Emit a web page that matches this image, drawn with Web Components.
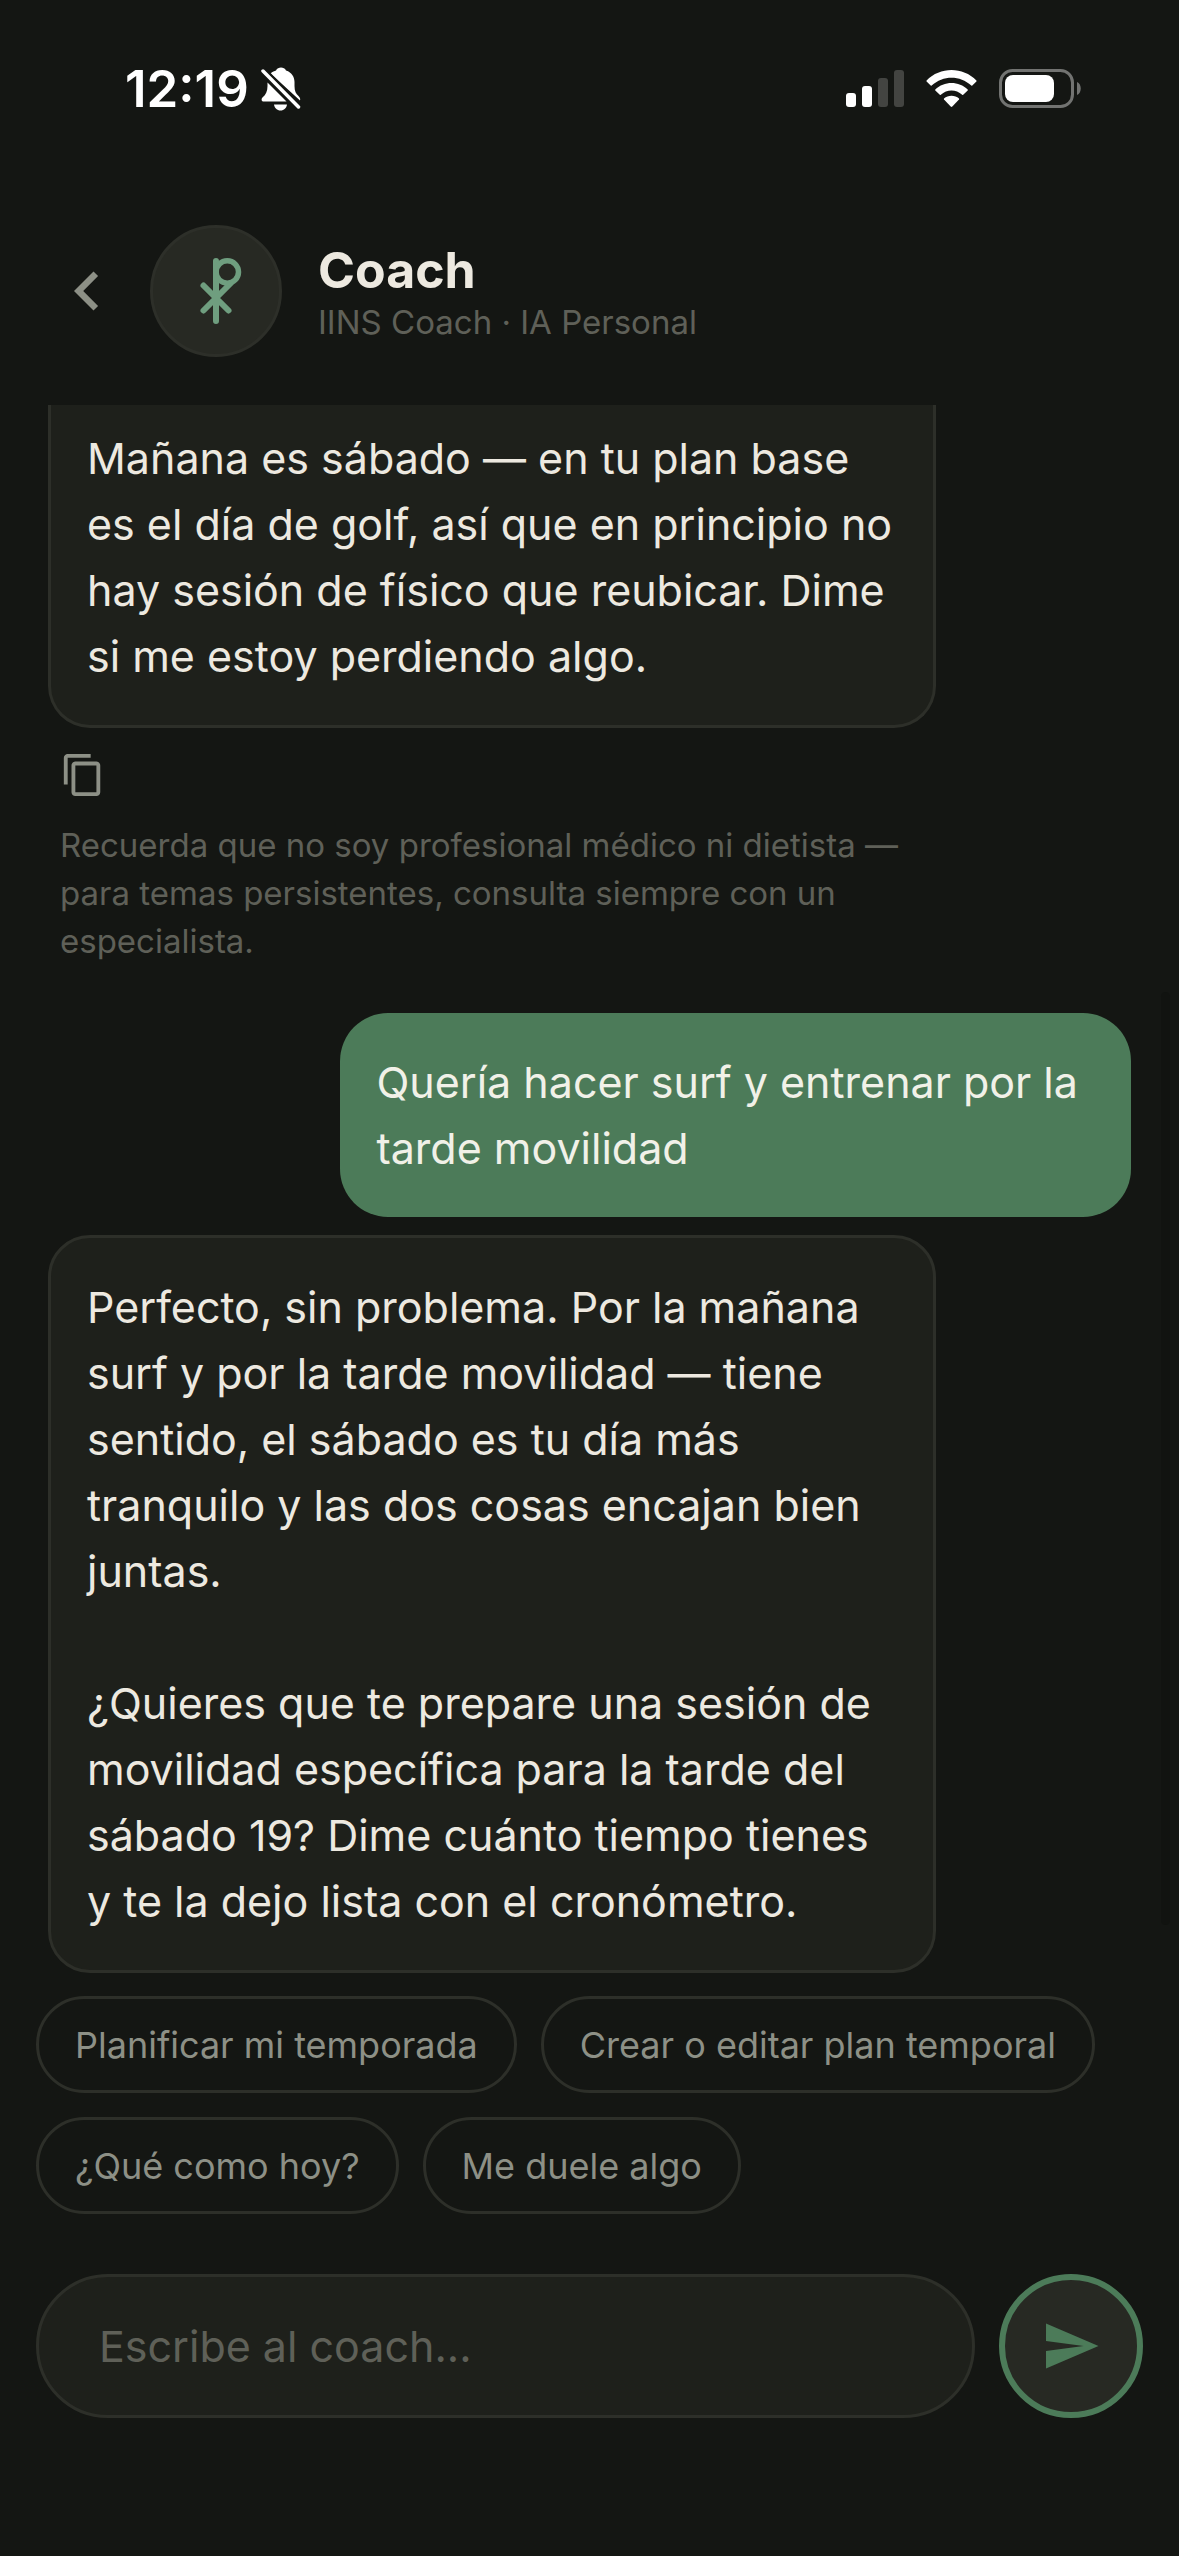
<!DOCTYPE html>
<html lang="es">
<head>
<meta charset="utf-8">
<meta name="viewport" content="width=device-width, initial-scale=1">
<title>Coach</title>
<style>
  :root {
    --bg: #141613;
    --surface: #1e201b;
    --raised: #272923;
    --line: #2d2f29;
    --text: #ede9e0;
    --soft: #8d9086;
    --muted: #5f6058;
    --accent: #4c7b59;
    --accent-light: #6f9e7f;
  }
  body { margin: 0; background: var(--bg); color: var(--text); font-family: Inter, "Liberation Sans", sans-serif; }
</style>
</head>
<body>
<coach-app>
  <status-bar slot="top"></status-bar>
  <chat-header slot="top" name="Coach" detail="IINS Coach · IA Personal"></chat-header>
  <chat-message continued>Mañana es sábado — en tu plan base es el día de golf, así que en principio no hay sesión de físico que reubicar. Dime si me estoy perdiendo algo.</chat-message>
  <message-note>Recuerda que no soy profesional médico ni dietista — para temas persistentes, consulta siempre con un especialista.</message-note>
  <chat-message own>Quería hacer surf y entrenar por la tarde movilidad</chat-message>
  <chat-message><p>Perfecto, sin problema. Por la mañana surf y por la tarde movilidad — tiene sentido, el sábado es tu día más tranquilo y las dos cosas encajan bien juntas.</p><p>¿Quieres que te prepare una sesión de movilidad específica para la tarde del sábado 19? Dime cuánto tiempo tienes y te la dejo lista con el cronómetro.</p></chat-message>
  <quick-replies slot="bottom">
    <quick-reply>Planificar mi temporada</quick-reply>
    <quick-reply>Crear o editar plan temporal</quick-reply>
    <quick-reply>¿Qué como hoy?</quick-reply>
    <quick-reply>Me duele algo</quick-reply>
  </quick-replies>
  <chat-composer slot="bottom"></chat-composer>
</coach-app>
<script>
const define = (name, html, setup) => customElements.define(name, class extends HTMLElement {
  constructor() {
    super();
    this.attachShadow({ mode: 'open' }).innerHTML = html;
  }
  connectedCallback() { if (setup) setup(this, this.shadowRoot); }
});

define('coach-app', `
  <style>
    :host { display: flex; flex-direction: column; height: 100vh; overflow: hidden; }
    main { position: relative; flex: 1; min-height: 0; overflow: hidden; display: flex; flex-direction: column; justify-content: flex-end; padding: 0 48px 23px; }
    .thumb { position: absolute; right: 9px; top: 587px; bottom: 71px; width: 9px; border-radius: 5px; background: #111310; }
  </style>
  <slot name="top"></slot>
  <main><slot></slot><div class="thumb"></div></main>
  <slot name="bottom"></slot>`);

define('status-bar', `
  <style>
    :host { display: flex; align-items: center; justify-content: space-between; height: 177px; padding: 0 97px 0 125px; color: #fff; }
    div { display: flex; align-items: center; }
    .time { gap: 12px; font-size: 51px; font-weight: 600; line-height: 60px; }
    .signs { gap: 22px; }
    svg { display: block; }
  </style>
  <div class="time"><span>12:19</span>
    <svg width="40" height="44" viewBox="0 0 40 44" fill="#fff" aria-label="Silencio">
      <path d="M9.500 6.500C11.500 4.500 13.500 4 15 3.500C16 1.200 18 0.500 20 0.500S24 1.200 25 3.500C31 5.500 33.500 10 33.500 15V19C33.500 24 35 27 37.500 29C39 30.500 39.500 32 39 33.500Z"/>
      <path d="M6.500 15.500L25.500 34.500H2.500C0.500 34.500 0 32 1.500 30.500C5 27.500 6.500 24 6.500 19Z"/>
      <path d="M13 37.500H26C25.500 41 23 43.500 19.500 43.500S13.500 41 13 37.500Z"/>
      <path d="M2 4L37.500 40" stroke="#141613" stroke-width="8"/>
      <path d="M2 4L37.500 40" stroke="#fff" stroke-width="3.500" stroke-linecap="round"/>
    </svg>
  </div>
  <div class="signs">
    <svg width="58" height="38" viewBox="0 0 58 38" aria-label="Cobertura">
      <rect x="0" y="23" width="10" height="14" rx="3" fill="#fff"/><rect x="16" y="16" width="10" height="21" rx="3" fill="#fff"/>
      <rect x="32" y="8" width="10" height="29" rx="3" fill="#434441"/><rect x="48" y="0" width="10" height="37" rx="3" fill="#434441"/>
    </svg>
    <svg width="51" height="38" viewBox="0 0 51 38" fill="#fff" aria-label="Wifi">
      <path d="M0.600 10.500C14-3.500 37-3.500 50.400 10.500Q50.800 11 50.400 11.500L46.300 15.600Q45.800 16 45.300 15.600C34 5 17 5 5.700 15.600Q5.200 16 4.700 15.600L0.600 11.500Q0.200 11 0.600 10.500Z"/>
      <path d="M9.300 19.500C18 10.800 33 10.800 41.700 19.500Q42.100 20 41.700 20.500L37.200 24.800Q36.700 25.200 36.200 24.800C30 19 21 19 14.800 24.800Q14.300 25.200 13.800 24.800L9.300 20.500Q8.900 20 9.300 19.500Z"/>
      <path d="M18 28.500C22 24.800 29 24.800 33 28.500Q33.400 29 33 29.500L26.300 36.600Q25.500 37.400 24.700 36.600L18 29.500Q17.600 29 18 28.500Z"/>
    </svg>
    <svg width="83" height="40" viewBox="0 0 83 40" aria-label="Batería">
      <rect x="1.500" y="1.500" width="72" height="36" rx="12" fill="none" stroke="#727371" stroke-width="3"/>
      <rect x="6" y="6" width="49" height="27" rx="8" fill="#fff"/>
      <path d="M78 13C83 15 83 24 78 26Z" fill="#727371"/>
    </svg>
  </div>`);

define('chat-header', `
  <style>
    :host { display: flex; align-items: center; padding: 48px; }
    button { border: 0; padding: 0; background: none; color: var(--soft); }
    svg { display: block; }
    .avatar { box-sizing: border-box; width: 132px; height: 132px; margin: 0 36px 0 24px; border: 3px solid var(--line); border-radius: 50%; background: var(--raised); display: grid; place-items: center; }
    h1, p { margin: 0; }
    h1 { font-size: 50px; font-weight: 700; line-height: 62px; }
    p { font-size: 33px; line-height: 42px; color: var(--muted); }
  </style>
  <button type="button" aria-label="Volver"><svg width="78" height="78" viewBox="0 0 24 24" fill="currentColor"><path d="M15.410 7.410L14 6l-6 6 6 6 1.410-1.410L10.830 12z"/></svg></button>
  <div class="avatar"><svg width="72" height="72" viewBox="0 0 72 72" fill="none" stroke="var(--accent-light)" stroke-width="6" stroke-linecap="round"><path d="M36 6V66M23.500 30.500L48.500 55.500M23.500 55.500L50.500 28.500"/><circle cx="47.300" cy="17" r="11.200" stroke-width="5.500"/></svg></div>
  <div><h1></h1><p></p></div>`,
  (el, root) => {
    root.querySelector('h1').textContent = el.getAttribute('name');
    root.querySelector('p').textContent = el.getAttribute('detail');
  });

define('chat-message', `
  <style>
    :host { display: block; box-sizing: border-box; flex: none; align-self: flex-start; width: fit-content; max-width: 82%; padding: 36px; border: 3px solid var(--line); border-radius: 42px; background: var(--surface); font-size: 43px; line-height: 66px; }
    :host([own]) { align-self: flex-end; max-width: 73%; margin: 48px 0 18px; border: 0; border-radius: 48px; background: var(--accent); color: #f1f1e8; }
    :host([continued]) { padding-top: 20px; border-top: 0; border-radius: 0 0 42px 42px; }
    ::slotted(p) { margin: 0; }
    ::slotted(p:not(:first-of-type)) { margin-top: 66px; }
  </style><slot></slot>`);

define('message-note', `
  <style>
    :host { display: block; flex: none; max-width: 82%; padding: 24px 12px 0; box-sizing: border-box; }
    button { display: block; border: 0; padding: 0; margin-bottom: 23px; background: none; color: var(--soft); }
    svg { display: block; }
    p { margin: 0; font-size: 33px; line-height: 48px; color: var(--muted); }
  </style>
  <button type="button" aria-label="Copiar"><svg width="46" height="46" viewBox="0 0 24 24" fill="currentColor"><path d="M16 1H4c-1.100 0-2 .9-2 2v14h2V3h12V1zm3 4H8c-1.100 0-2 .9-2 2v14c0 1.100.9 2 2 2h11c1.100 0 2-.9 2-2V7c0-1.100-.9-2-2-2zm0 16H8V7h11v14z"/></svg></button>
  <p><slot></slot></p>`);

define('quick-replies', `
  <style>:host { display: flex; flex-wrap: wrap; gap: 24px; padding: 0 36px 60px; }</style><slot></slot>`);

define('quick-reply', `
  <style>
    :host { display: block; }
    button { display: block; height: 97px; padding: 0 36px; border: 3px solid var(--line); border-radius: 49px; background: none; color: var(--soft); font: 36px/48px Inter, "Liberation Sans", sans-serif; white-space: nowrap; }
  </style><button type="button"><slot></slot></button>`);

define('chat-composer', `
  <style>
    :host { display: flex; gap: 24px; padding: 0 36px 138px; }
    input { box-sizing: border-box; flex: 1; min-width: 0; height: 144px; padding: 0 60px; border: 3px solid var(--line); border-radius: 72px; background: var(--surface); color: var(--text); font: 43px/66px Inter, "Liberation Sans", sans-serif; outline: 0; }
    input::placeholder { color: var(--muted); opacity: 1; }
    button { box-sizing: border-box; width: 144px; height: 144px; padding: 0; border: 6px solid var(--accent); border-radius: 50%; background: var(--raised); color: var(--accent); display: grid; place-items: center; }
    svg { display: block; }
  </style>
  <input type="text" placeholder="Escribe al coach..." aria-label="Escribe al coach">
  <button type="button" aria-label="Enviar"><svg width="60" height="60" viewBox="0 0 24 24" fill="currentColor"><path d="M2.010 21L23 12 2.010 3 2 10l15 2-15 2z"/></svg></button>`);
</script>
</body>
</html>
